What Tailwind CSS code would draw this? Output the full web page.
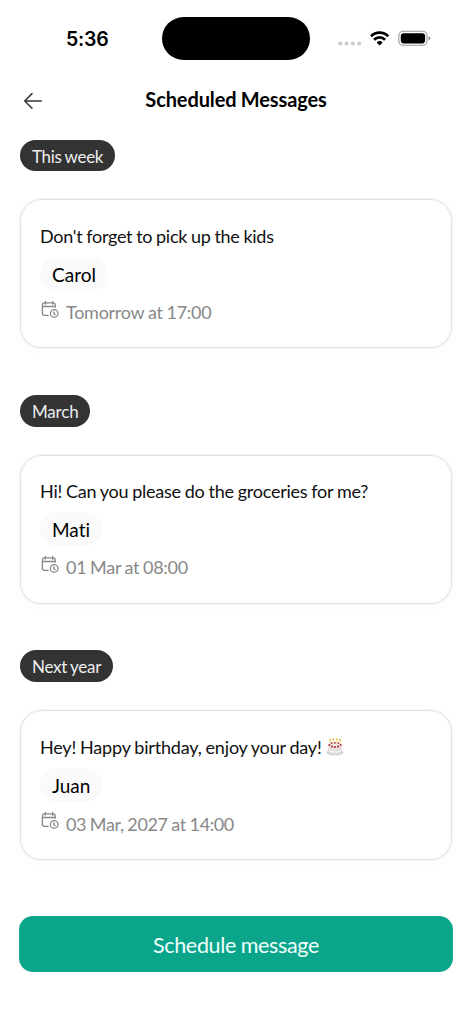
<!DOCTYPE html>
<html lang="en">
<head>
<meta charset="utf-8">
<title>Scheduled Messages</title>
<script src="https://cdn.jsdelivr.net/npm/@tailwindcss/browser@4"></script>
</head>
<body class="bg-white">
<svg class="hidden">
  <symbol id="calendar-clock" viewBox="0 0 19 19" fill="none" stroke="currentColor" stroke-width="1.3" stroke-linecap="round" stroke-linejoin="round">
    <path d="M14.2 7.2V4.9a2 2 0 0 0-2-2H3.4a2 2 0 0 0-2 2v8.4a2 2 0 0 0 2 2h3.8M4.4 1.4v2.8M11.7 1.4v2.8M1.4 6.5h12.8"/><circle cx="13.2" cy="13.4" r="3.8"/><path d="M12.9 11.8v1.9l1.2 1"/>
  </symbol>
</svg>
<main class="flex h-[1024px] w-[472px] flex-col overflow-hidden bg-white font-[Lato,sans-serif] text-black">
  <header class="grid h-[76px] grid-cols-[162px_148px_162px] items-center">
    <div class="pt-[2px] pl-[66px] font-[Inter,sans-serif] text-[19.5px] leading-6 font-semibold tracking-[-0.2px]">5:36</div>
    <div class="h-[43px] rounded-full bg-black"></div>
    <svg class="h-[34px] w-[162px]" viewBox="310 21 162 34">
      <g fill="#cbcbcb"><circle cx="340.2" cy="43.5" r="2.1"/><circle cx="346.6" cy="43.5" r="2.1"/><circle cx="352.9" cy="43.5" r="2.1"/><circle cx="359.2" cy="43.5" r="2.1"/></g>
      <g fill="none" stroke="#000" stroke-width="2.7"><path d="M371 36.2a12.3 12.3 0 0 1 17.2 0"/><path d="M374.1 39.7a7.8 7.8 0 0 1 11 0"/></g>
      <path d="M376.6 42.4a4.6 4.6 0 0 1 6 0L379.6 45.4Z"/>
      <rect x="398.8" y="31.3" width="28.2" height="14" rx="4.4" fill="none" stroke="#999" stroke-width="1.1"/>
      <rect x="400.8" y="33.2" width="24.3" height="10.2" rx="2.8"/>
      <path d="M428.6 36.2q1.7.6 1.7 2.1t-1.7 2.1Z" fill="#888"/>
    </svg>
  </header>
  <nav class="grid h-[48px] grid-cols-[100px_1fr_100px] items-center">
    <svg class="ml-[23px] h-5 w-5" viewBox="0 0 20 20" fill="none" stroke="#33363b" stroke-width="1.5" stroke-linecap="round" stroke-linejoin="round"><path d="M18.3 11H1.7M9 3.6 1.7 11 9 18.2"/></svg>
    <h1 class="mb-[2px] text-center text-[20px] leading-6 font-bold tracking-[-0.11px] [word-spacing:-0.5px]">Scheduled Messages</h1>
  </nav>

  <section class="flex h-[255px] shrink-0 flex-col items-start px-[20px] pt-[16px]">
    <h2 class="h-[31px] rounded-full bg-[#333] px-3 text-[17px] leading-[33px] tracking-[-0.34px] text-[#eee] [word-spacing:-0.5px]">This week</h2>
    <article class="mt-[28px] flex h-[149px] w-[432px] flex-col items-start rounded-[22px] border border-[#e2e2e2] pt-[24px] pl-[19px] shadow-[0_0_1px_1px_rgba(0,0,0,0.03),0_2px_10px_rgba(0,0,0,0.03)]">
      <p class="text-[18px] leading-6 tracking-[-0.27px] text-[#111] [word-spacing:-0.5px]">Don't forget to pick up the kids</p>
      <span class="mt-[9px] h-[34px] rounded-full bg-[#fafafa] px-3 text-[19px] leading-[35px]">Carol</span>
      <div class="mt-[8px] flex h-6 text-[#888]"><svg class="mt-[1px] mr-[6px] ml-[1px] h-[19px] w-[19px]"><use href="#calendar-clock"/></svg><time class="mt-[1px] text-[18px] leading-6 tracking-[-0.27px] [word-spacing:-0.5px]">Tomorrow at 17:00</time></div>
    </article>
  </section>
  <section class="flex h-[255px] shrink-0 flex-col items-start px-[20px] pt-[16px]">
    <h2 class="h-[32px] rounded-full bg-[#333] px-3 text-[17px] leading-[33px] tracking-[-0.2px] text-[#eee]">March</h2>
    <article class="mt-[28px] flex h-[149px] w-[432px] flex-col items-start rounded-[22px] border border-[#e2e2e2] pt-[23px] pl-[19px] shadow-[0_0_1px_1px_rgba(0,0,0,0.03),0_2px_10px_rgba(0,0,0,0.03)]">
      <p class="text-[18px] leading-6 tracking-[-0.23px] text-[#111] [word-spacing:-0.5px]">Hi! Can you please do the groceries for me?</p>
      <span class="mt-[9px] h-[34px] rounded-full bg-[#fafafa] px-3 text-[19px] leading-[35px] [font-variant-ligatures:none]">Mati</span>
      <div class="mt-[8px] flex h-6 text-[#888]"><svg class="mt-[1px] mr-[6px] ml-[1px] h-[19px] w-[19px]"><use href="#calendar-clock"/></svg><time class="mt-[1px] text-[18px] leading-6 tracking-[-0.3px] [word-spacing:-0.5px]">01 Mar at 08:00</time></div>
    </article>
  </section>
  <section class="flex h-[255px] shrink-0 flex-col items-start px-[20px] pt-[16px]">
    <h2 class="h-[32px] rounded-full bg-[#333] px-3 text-[17px] leading-[33px] tracking-[-0.29px] text-[#eee] [word-spacing:-0.5px]">Next year</h2>
    <article class="mt-[28px] flex h-[150px] w-[432px] flex-col items-start rounded-[22px] border border-[#e2e2e2] pt-[24px] pl-[19px] shadow-[0_0_1px_1px_rgba(0,0,0,0.03),0_2px_10px_rgba(0,0,0,0.03)]">
      <div class="flex items-center"><p class="text-[18px] leading-6 tracking-[-0.18px] text-[#111] [word-spacing:-0.5px]">Hey! Happy birthday, enjoy your day!</p>
        <svg class="ml-1 h-[18px] w-[18px]" viewBox="0 0 18 18">
          <ellipse cx="9" cy="14.3" rx="8.4" ry="3" fill="#c9c9c9"/>
          <path d="M2.2 7v7.2c0 3 13.6 3 13.6 0V7Z" fill="#e4dfda"/>
          <ellipse cx="9" cy="7" rx="6.8" ry="2.7" fill="#f5f0e9"/>
          <path d="M4 3v4M7.2 2.5v4M10.8 2.5v4M14 3v4" stroke="#ead7a2" stroke-width="1.1"/>
          <g fill="#f6bd2f"><circle cx="4" cy="2" r="1"/><circle cx="7.2" cy="1.3" r="1"/><circle cx="10.8" cy="1.3" r="1"/><circle cx="14" cy="2" r="1"/></g>
          <g fill="#ad2445"><circle cx="3.4" cy="7.1" r="1"/><circle cx="6" cy="8.6" r="1.1"/><circle cx="9" cy="9" r="1.1"/><circle cx="12" cy="8.6" r="1.1"/><circle cx="14.6" cy="7.1" r="1"/><circle cx="5.6" cy="5.1" r=".9"/><circle cx="9" cy="4.8" r=".9"/><circle cx="12.4" cy="5.1" r=".9"/></g>
          <path d="M3 12.5q1.5 2 3 .8 1.5 1.7 3 .3 1.5 1.4 3-.3 1.5 1 3-.8" fill="none" stroke="#fff" stroke-width=".9"/>
        </svg></div>
      <span class="mt-[9px] h-[34px] rounded-full bg-[#fafafa] px-3 text-[19px] leading-[35px]">Juan</span>
      <div class="mt-[8px] flex h-6 text-[#888]"><svg class="mt-[1px] mr-[6px] ml-[1px] h-[19px] w-[19px]"><use href="#calendar-clock"/></svg><time class="mt-[2px] text-[18px] leading-6 tracking-[-0.38px] [word-spacing:-0.5px]">03 Mar, 2027 at 14:00</time></div>
    </article>
  </section>
  <button class="mt-[27px] ml-[19px] h-[56px] w-[434px] shrink-0 rounded-[14px] bg-[#0ba58b] pt-[1px] text-[21.5px] leading-7 tracking-[-0.34px] text-[#f0fffb] [word-spacing:-0.5px]">Schedule message</button>
</main>
</body>
</html>
